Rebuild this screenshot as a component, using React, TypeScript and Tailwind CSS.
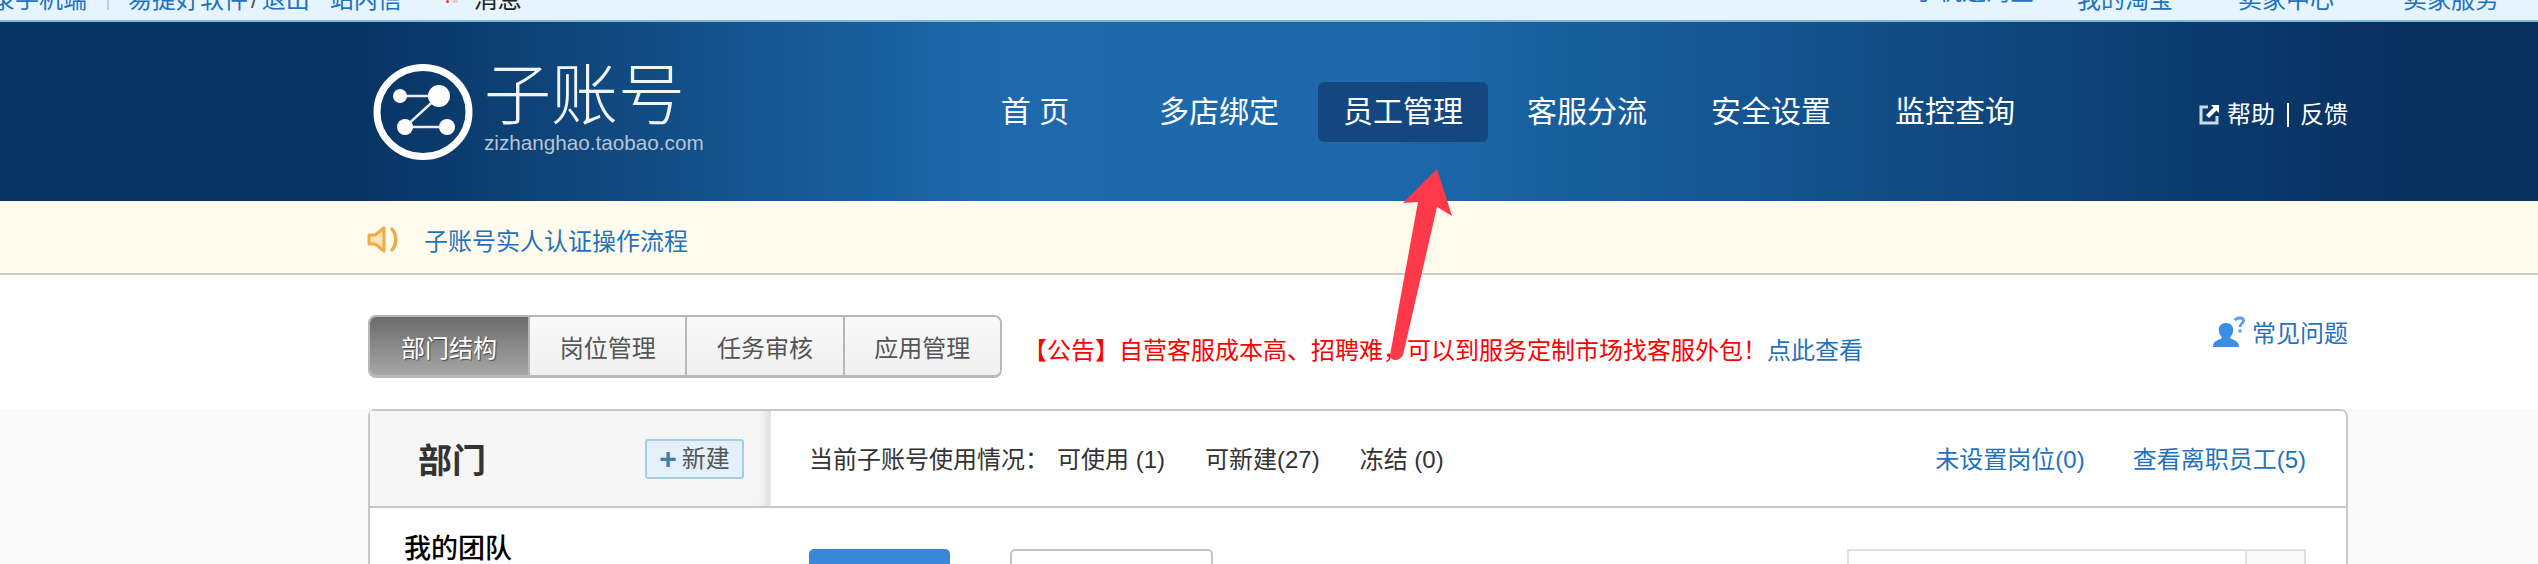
const font = "font-['Liberation_Sans','Noto_Sans_CJK_SC',sans-serif]";

const navItems = ["多店绑定", "员工管理", "客服分流", "安全设置", "监控查询"];
const tabs = ["岗位管理", "任务审核", "应用管理"];

const TopBar = () => (
  <div className="h-[22px] shrink-0 overflow-hidden border-b-2 border-[#80b6dc] bg-[#e5f4ff] text-[24px] leading-[24px] text-[#1f72bd]">
    <div className="flex justify-between whitespace-nowrap">
      <div className="flex -ml-[9px] -mt-[12px]">
        <span>录手机端</span>
        <span className="ml-[20px] h-[22px] w-[2px] bg-[#c4ccd2]" />
        <span className="ml-[19px]">易捷好软件</span>
        <span className="ml-[3px] text-[#555]">/</span>
        <span className="ml-[4px]">退出</span>
        <span className="ml-[20px]">站内信</span>
        <span className="ml-[44px] mt-[12px] h-[3px] w-[3px] rounded-full bg-[#f03a2e]" />
        <span className="ml-[3px] mt-[12px] h-[3px] w-[6px] rounded-full bg-[#f5c9c4]" />
        <span className="ml-[16px] text-[#222]">消息</span>
      </div>
      <div className="flex pr-[39px] -mt-[12px]">
        <span className="-mt-[8px]">手机逛淘宝</span>
        <span className="ml-[43px]">我的淘宝</span>
        <span className="ml-[65px]">卖家中心</span>
        <span className="ml-[69px]">卖家服务</span>
      </div>
    </div>
  </div>
);

const Logo = () => (
  <div className="flex items-start">
    <svg viewBox="0 0 100 96" className="h-[96px] w-[100px] shrink-0">
      <ellipse cx="50" cy="48" rx="46" ry="44.5" fill="none" stroke="#fff" strokeWidth="7" />
      <path d="M27 32H66L32 63H74" fill="none" stroke="#e6edf4" strokeWidth="2.5" />
      <circle cx="27" cy="32" r="7" fill="#fff" />
      <circle cx="66" cy="32" r="11" fill="#fff" />
      <circle cx="32" cy="63" r="8" fill="#fff" />
      <circle cx="74" cy="63" r="8" fill="#fff" />
    </svg>
    <div className="ml-[11px] -mt-[4px] flex w-[222px] flex-col whitespace-nowrap">
      <span className="text-[67px] font-light leading-[72px] text-[#f2f5f8]">子账号</span>
      <span className="text-[20.7px] leading-[22px] text-[#b6c5d6]">zizhanghao.taobao.com</span>
    </div>
  </div>
);

const Header = () => (
  <div className="flex h-[179px] shrink-0 items-center bg-[linear-gradient(90deg,#083463_0,#083463_360px,#1d69ac_1000px,#1c68aa_1400px,#07305f_2400px,#07305f_100%)] pl-[373px] pr-[190px]">
    <Logo />
    <div className="ml-[244px] flex gap-[14px] text-[30px] text-white">
      <a className="flex h-[60px] w-[170px] items-center justify-center whitespace-pre">首 页</a>
      {navItems.map((item) => (
        <a
          key={item}
          className={
            item === "员工管理"
              ? "flex h-[60px] w-[170px] items-center justify-center rounded-[6px] bg-[#14477f]"
              : "flex h-[60px] w-[170px] items-center justify-center"
          }
        >
          {item}
        </a>
      ))}
    </div>
    <div className="ml-auto mt-[6px] flex items-center whitespace-nowrap text-[24px] leading-[30px] text-white">
      <svg viewBox="0 0 21 21" className="mr-[7px] h-[21px] w-[21px]">
        <path d="M9 3H2v16h16v-7" fill="none" stroke="#cfd9e4" strokeWidth="3" />
        <path d="M12 1h8v8l-2.6-2.6L10 14 7 11l7.6-7.4z" fill="#fff" />
      </svg>
      <span>帮助</span>
      <span className="ml-[12px] h-[24px] w-[2px] bg-white" />
      <span className="ml-[11px]">反馈</span>
    </div>
  </div>
);

const Notice = () => (
  <div className="flex h-[74px] shrink-0 items-center border-b-2 border-[#cfcdc8] bg-[#fffcee] pl-[367px] pt-[4px] text-[24px] text-[#1f72bd]">
    <svg viewBox="0 0 33 27" className="h-[27px] w-[33px]">
      <path d="M2 9h6l9-7v23l-9-7H2z" fill="#fde3b8" stroke="#f4a949" strokeWidth="3" strokeLinejoin="round" />
      <path d="M25 3c5 6 5 15 0 21" fill="none" stroke="#f4a949" strokeWidth="3.5" strokeLinecap="round" />
    </svg>
    <span className="ml-[24px] mt-[6px]">子账号实人认证操作流程</span>
  </div>
);

const TabRow = () => (
  <div className="flex h-[134px] shrink-0 pl-[368px] pr-[190px] pt-[40px]">
    <div className="flex h-[63px] w-[634px] overflow-hidden rounded-[8px] border-2 border-b-[3px] border-[#b8b8b8] text-[24px] text-[#555]">
      <span className="flex w-[158px] items-center justify-center bg-[linear-gradient(180deg,#6b6b6b,#a6a6a6)] pt-[5px] text-white [text-shadow:1px_1px_1px_#444]">
        部门结构
      </span>
      {tabs.map((tab) => (
        <span
          key={tab}
          className="flex flex-1 items-center justify-center border-l-2 border-[#b8b8b8] bg-[linear-gradient(180deg,#fafafa,#efefef)] pt-[5px] first:border-l-0"
        >
          {tab}
        </span>
      ))}
    </div>
    <p className="ml-[21px] h-[63px] whitespace-nowrap text-[24px] leading-[72px] text-[#fe0000]">
      【公告】自营客服成本高、招聘难，可以到服务定制市场找客服外包！
      <a className="text-[#1f72bd]">点此查看</a>
    </p>
    <div className="ml-auto flex h-[36px] items-end whitespace-nowrap text-[24px] leading-[34px] text-[#1f72bd]">
      <svg viewBox="0 0 32 31" className="mb-[4px] mr-[7px] h-[31px] w-[32px]">
        <path d="M13 7c5.500 0 8 4 7 9-.4 2-1.300 3.500-2.500 4.500v2c3 1.500 8.500 2 8.500 8.500H0c0-6.500 5.500-7 8.500-8.500v-2C7.300 19.500 6.400 18 6 16 5 11 7.500 7 13 7z" fill="#3b8ee6" />
        <path d="M22 4.500c1-3 8-3.500 8.500-.5.800 3-3.500 3.800-3.500 7" fill="none" stroke="#5ba0e8" strokeWidth="2.800" />
        <circle cx="27" cy="15" r="1.800" fill="#5ba0e8" />
      </svg>
      <span>常见问题</span>
    </div>
  </div>
);

const Card = () => (
  <div className="min-h-0 flex-1 bg-[#fafafa] pl-[368px] pr-[190px]">
    <div className="h-[200px] rounded-t-[7px] border-2 border-[#c8c8c8] bg-white">
      <div className="flex h-[97px] border-b-2 border-[#c8c8c8] text-[24px] text-[#333]">
        <div className="flex w-[401px] items-center justify-between border-r-2 border-[#e4e4e4] bg-[#f6f6f6] pl-[48px] pr-[25px] shadow-[inset_-8px_0_8px_-6px_#d8d8d8]">
          <span className="mt-[6px] text-[34px] font-bold text-[#333]">部门</span>
          <button className="flex h-[40px] w-[99px] items-center justify-center rounded-[3px] border-2 border-[#a7cde4] bg-[#e3f0f9] text-[24px] text-[#555]">
            <span className="mr-[5px] text-[30px] font-bold leading-[30px] text-[#3c7fa8]">+</span>
            新建
          </button>
        </div>
        <div className="flex flex-1 items-center whitespace-nowrap pl-[38px] pr-[40px] pt-[3px]">
          <span>当前子账号使用情况：</span>
          <span className="ml-[8px]">可使用 (1)</span>
          <span className="ml-[40px]">可新建(27)</span>
          <span className="ml-[40px]">冻结 (0)</span>
          <a className="ml-auto text-[#1f72bd]">未设置岗位(0)</a>
          <a className="ml-[48px] text-[#1f72bd]">查看离职员工(5)</a>
        </div>
      </div>
      <div className="flex">
        <div className="w-[401px] pl-[34px] pt-[26px] text-[27px] font-medium leading-[30px] text-black">我的团队</div>
        <div className="flex flex-1 pl-[38px] pr-[40px] pt-[41px]">
          <button className="h-[60px] w-[141px] rounded-[5px] bg-[#3a87d9]" />
          <div className="ml-[60px] h-[60px] w-[203px] rounded-[5px] border-2 border-[#c4c4c4] bg-white" />
          <div className="ml-auto flex h-[60px] w-[459px] border-2 border-[#dde1e5] bg-[#fafafa]">
            <div className="w-[398px] border-r-2 border-[#dde1e5] bg-white" />
          </div>
        </div>
      </div>
    </div>
  </div>
);

const Arrow = () => (
  <svg viewBox="0 0 75 200" className="pointer-events-none absolute left-[1385px] top-[165px] h-[200px] w-[75px]">
    <path d="M52 4L18 38L33 37L5 190Q6 195 10 195Q15 195 18 190L52 42L67 51Z" fill="#fe3a4a" />
  </svg>
);

export default function App() {
  return (
    <div className={`relative flex h-[564px] w-full flex-col overflow-hidden bg-white ${font}`}>
      <TopBar />
      <Header />
      <Notice />
      <TabRow />
      <Card />
      <Arrow />
    </div>
  );
}
